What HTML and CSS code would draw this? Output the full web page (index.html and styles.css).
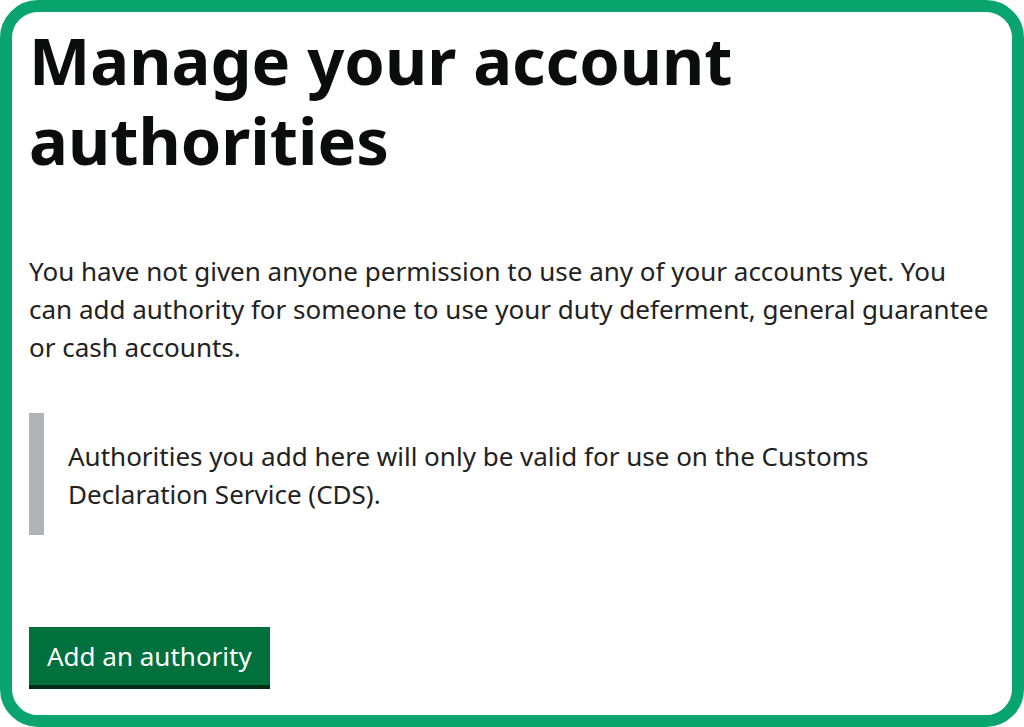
FILE: index.html
```html
<html>
<head>
    <link rel="stylesheet" href="styles.css">
</head>
<body>
<div class="frame">
    <h1 class="heading">Manage your account authorities</h1>

    <p class="body-text">You have not given anyone permission to use any of your accounts yet. You can add authority for someone to use your duty deferment, general guarantee or cash accounts.</p>

    <div class="inset">
        Authorities you add here will only be valid for use on the Customs Declaration Service (CDS).
    </div>

    <button class="btn">Add an authority</button>
</div>
</body>
</html>
```

FILE: styles.css
```css
html, body {
    margin: 0;
    padding: 0;
    background: #ffffff;
}

.frame {
    box-sizing: border-box;
    height: 727px;
    border: 12px solid #0aa46e;
    border-radius: 38px;
    padding: 8px 20px 0 17px;
    font-family: "Noto Sans", sans-serif;
    color: #0b0c0c;
}

.heading {
    margin: 0;
    width: 760px;
    font-size: 65px;
    line-height: 80px;
    font-weight: 700;
}

.body-text {
    margin: 72px 0 0 0;
    font-size: 26px;
    line-height: 38px;
    color: #222;
}

.inset {
    margin-top: 47px;
    border-left: 15px solid #b1b4b6;
    padding: 24px 0 22px 24px;
    font-size: 26px;
    line-height: 38px;
    color: #222;
}

.btn {
    margin-top: 92px;
    border: 0;
    box-shadow: 0 4px 0 #002d18;
    background-color: #00703c;
    color: #ffffff;
    font-family: "Noto Sans", sans-serif;
    font-size: 26px;
    line-height: 30px;
    padding: 14px 18px 14px 18px;
    cursor: pointer;
}
```
